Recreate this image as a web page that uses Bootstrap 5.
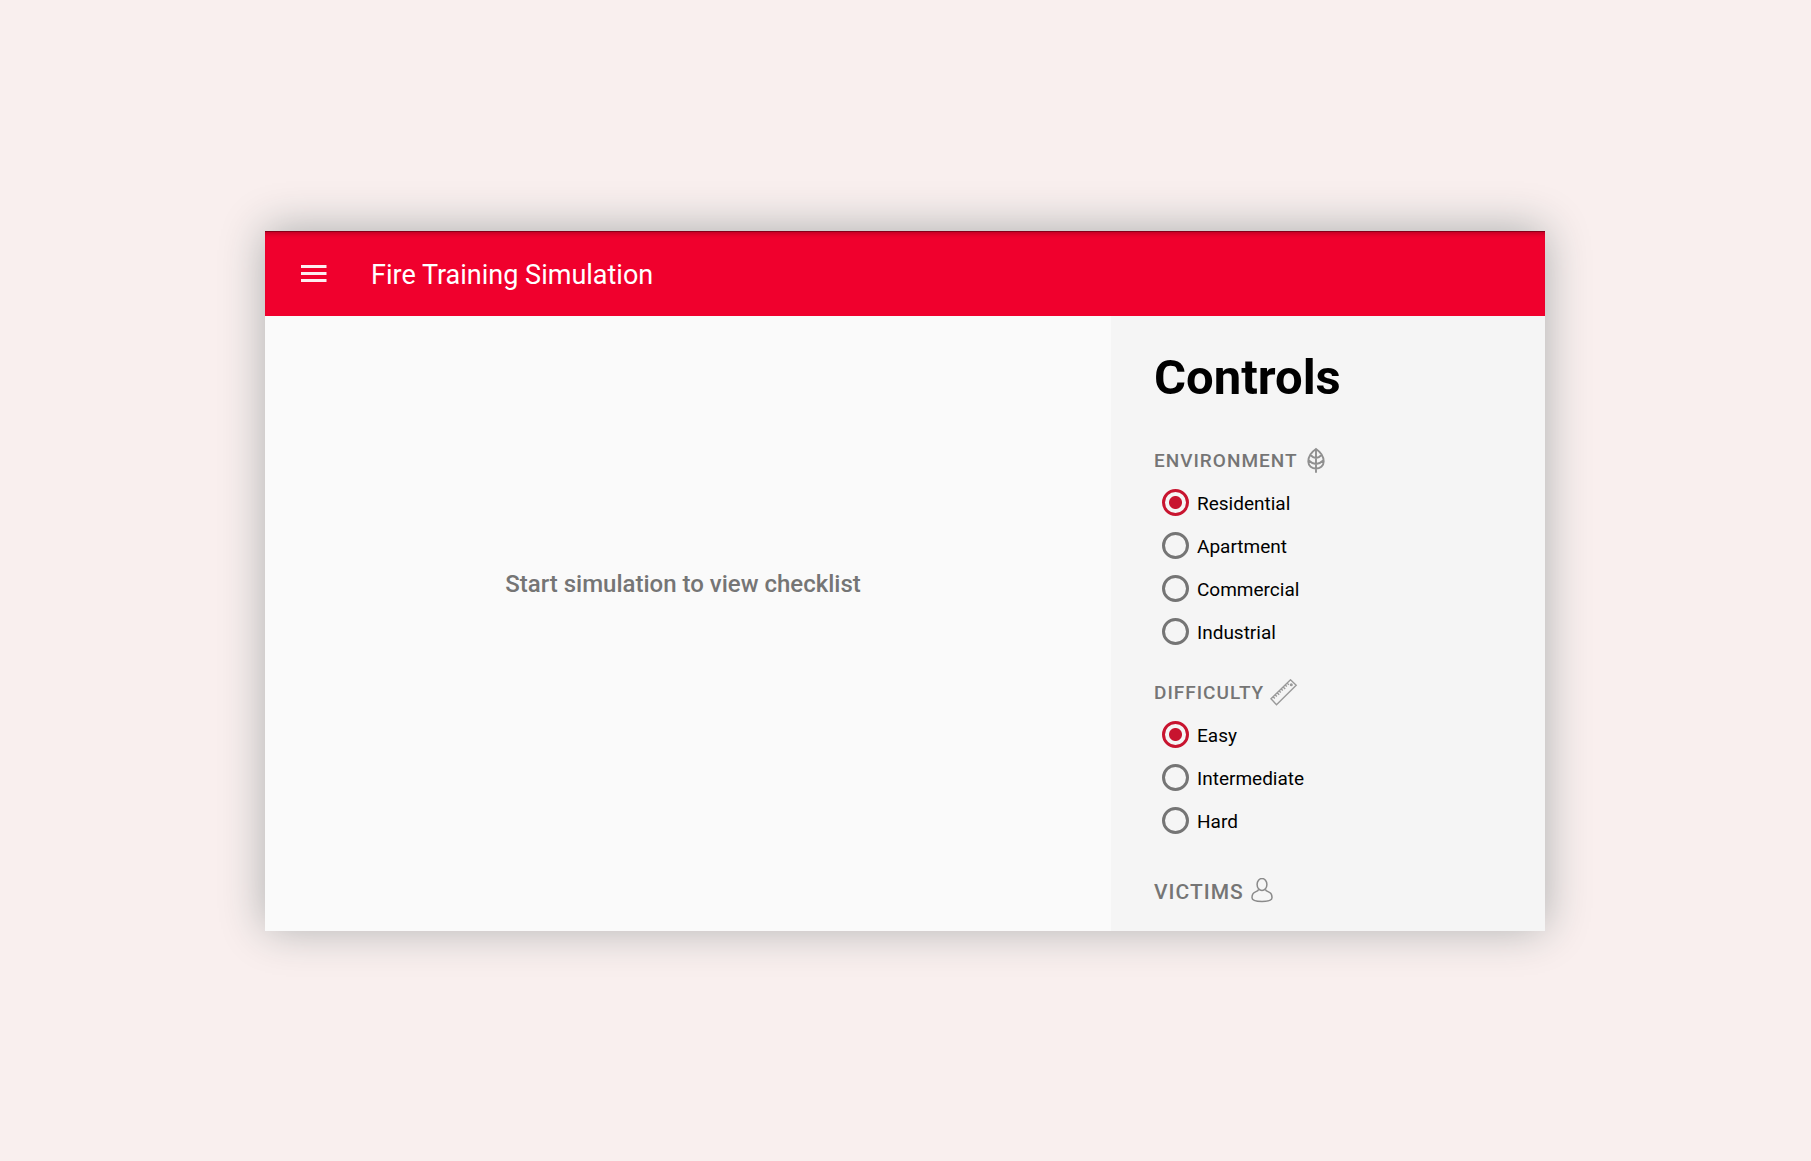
<!DOCTYPE html>
<html lang="en">
<head>
<meta charset="utf-8">
<meta name="viewport" content="width=device-width, initial-scale=1">
<title>Fire Training Simulation</title>
<link href="https://cdn.jsdelivr.net/npm/bootstrap@5.3.0/dist/css/bootstrap.min.css" rel="stylesheet">
<style>
  body { background: #f9efee; font-family: Roboto, "Liberation Sans", sans-serif; color: #000; padding-right: 1px; }
  .app-window { max-width: 1280px; background: #fafafa; box-shadow: 0 -2px 42px #acafaf; }
  .app-bar { min-height: 85px; background: #f0002d; color: #fff; padding: 24px 32px; box-shadow: inset 0 1px 0 rgba(0, 0, 0, .3), inset 0 6px 6px -5px rgba(0, 0, 0, .35); }
  .app-title { font-size: 27px; line-height: 33px; font-weight: 400; padding-top: 4px; }
  .menu-btn { color: inherit; line-height: 0; margin-right: 42px; }
  .stage { padding: 0 10px 78px 0; }
  .stage-note { font-size: 24px; line-height: 32px; font-weight: 500; color: #757575; }
  .controls-panel { flex: 0 0 434px; background: #f5f5f5; padding: 34px 43px 25px; }
  .controls-title { font-size: 49px; line-height: 56px; font-weight: 700; margin-bottom: 41px; }
  .group-title { font-size: 19px; line-height: 28px; font-weight: 500; letter-spacing: 1px; color: #757575; margin: 0 0 6px; gap: 6px; float: none; }
  .group-title-lg { font-size: 21px; margin: 36px 0 0; }
  .option-group + .option-group { margin-top: 26px; }
  .option-row { height: 43px; padding-left: 8px; gap: 8px; }
  .option-row .form-check-input { width: 27px; height: 27px; margin: 0; border: 3px solid #757575; background: none; box-shadow: none; flex: none; }
  .option-row .form-check-input:checked { border-color: #c8142f; background: radial-gradient(circle, #c8142f 6px, transparent 7px); }
  .option-row label { font-size: 19px; line-height: 28px; padding-top: 3px; }
</style>
<script src="https://cdn.jsdelivr.net/npm/bootstrap@5.3.0/dist/js/bootstrap.bundle.min.js"></script>
</head>
<body class="min-vh-100 d-flex align-items-center justify-content-center">
<div class="app-window w-100 d-flex flex-column">
  <header class="app-bar d-flex align-items-center">
    <button type="button" class="menu-btn btn p-0 border-0" aria-label="Menu">
      <svg width="32" height="32" viewBox="0 0 32 32" fill="none" stroke="currentColor" stroke-width="3" opacity=".93"><path d="M4 9.500h25.500M4 16.500h25.500M4 23.500h25.500"/></svg>
    </button>
    <h1 class="app-title mb-0">Fire Training Simulation</h1>
  </header>
  <div class="d-flex flex-grow-1">
    <main class="stage flex-grow-1 d-flex align-items-center justify-content-center">
      <p class="stage-note mb-0">Start simulation to view checklist</p>
    </main>
    <aside class="controls-panel">
      <h2 class="controls-title">Controls</h2>
      <form>
        <fieldset class="option-group">
          <legend class="group-title d-flex align-items-center">ENVIRONMENT<svg width="24" height="28" viewBox="0 0 24 28" fill="none" stroke="#909090" stroke-width="1.900" stroke-linecap="round"><path d="M12 2C7.500 5 4.300 9 4.300 14.500C4.300 19 8 21.500 12 21.500S19.700 19 19.700 14.500C19.700 9 16.500 5 12 2ZM12 2V25M6.500 8Q9 10.700 12 11Q15 10.700 17.500 8M4.800 13.500Q8 16.700 12 17Q16 16.700 19.200 13.500"/></svg></legend>
          <div class="option-row d-flex align-items-center"><input class="form-check-input" type="radio" name="env" id="env1" checked><label for="env1">Residential</label></div>
          <div class="option-row d-flex align-items-center"><input class="form-check-input" type="radio" name="env" id="env2"><label for="env2">Apartment</label></div>
          <div class="option-row d-flex align-items-center"><input class="form-check-input" type="radio" name="env" id="env3"><label for="env3">Commercial</label></div>
          <div class="option-row d-flex align-items-center"><input class="form-check-input" type="radio" name="env" id="env4"><label for="env4">Industrial</label></div>
        </fieldset>
        <fieldset class="option-group">
          <legend class="group-title d-flex align-items-center">DIFFICULTY<svg width="28" height="28" viewBox="0 0 28 28" fill="none" stroke="#9a9a9a" stroke-width="1.400"><path d="M1 19.800L20.500.8L26.200 6.200L6.500 25.800ZM3.200 17.800l1.600 1.600M5.200 15.800l1.600 1.600M7.200 13.800l2 2M9.200 11.900l1.600 1.600M11.200 9.900l1.600 1.600M13.200 8l2 2M15.200 6l1.600 1.600M17.200 4.100l1.600 1.600"/><circle cx="21.300" cy="5.800" r=".8"/></svg></legend>
          <div class="option-row d-flex align-items-center"><input class="form-check-input" type="radio" name="level" id="level1" checked><label for="level1">Easy</label></div>
          <div class="option-row d-flex align-items-center"><input class="form-check-input" type="radio" name="level" id="level2"><label for="level2">Intermediate</label></div>
          <div class="option-row d-flex align-items-center"><input class="form-check-input" type="radio" name="level" id="level3"><label for="level3">Hard</label></div>
        </fieldset>
        <h3 class="group-title group-title-lg d-flex align-items-center">VICTIMS<svg width="24" height="28" viewBox="0 0 24 28" fill="none" stroke="#8a8a8a" stroke-width="1.500"><ellipse cx="12" cy="6.500" rx="4.900" ry="6"/><path d="M8.600 11.300C8.400 12.700 7 13.200 5 14.100C2.500 15.200 2 17.200 2 19.700C2 22.400 7 23.400 12 23.400S22 22.400 22 19.700C22 17.200 21.500 15.200 19 14.100C17 13.200 15.600 12.700 15.400 11.300"/></svg></h3>
      </form>
    </aside>
  </div>
</div>
</body>
</html>
